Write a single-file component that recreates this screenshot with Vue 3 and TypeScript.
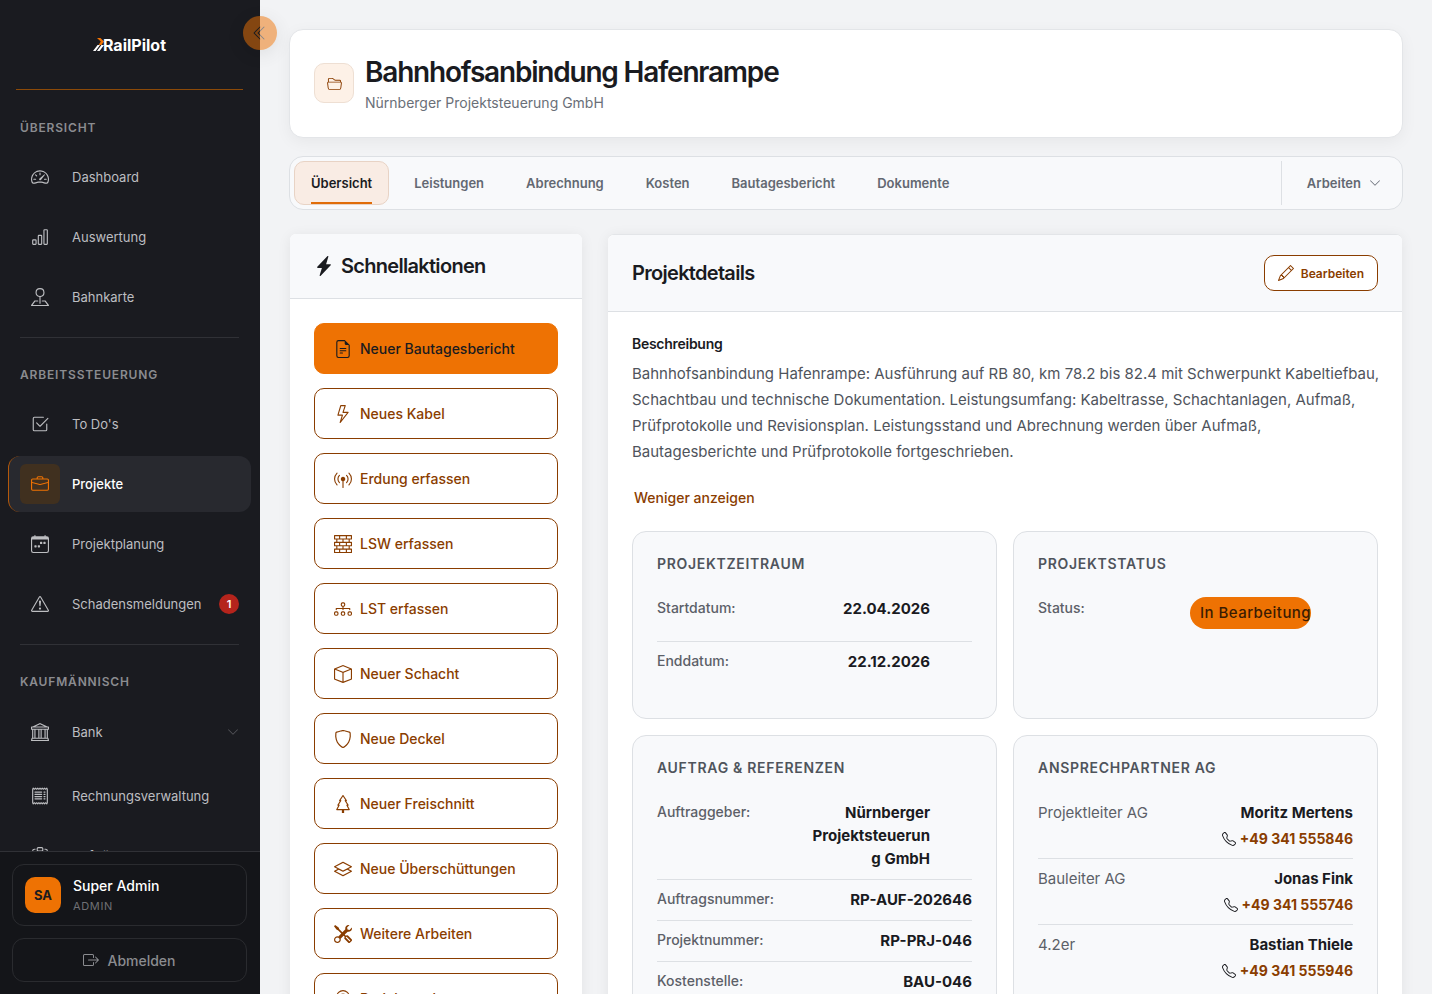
<script setup lang="ts">
import { ref } from 'vue'

interface NavItem {
  label: string
  icon: string
  badge?: number
  expandable?: boolean
}
interface NavGroup {
  title: string
  items: NavItem[]
}
interface DetailRow {
  label: string
  value: string
  editable?: boolean
}
interface Contact {
  role: string
  name: string
  phone: string
}

const icons: Record<string, string> = {
  gauge:
    'M8 4a.5.5 0 0 1 .5.5V6a.5.5 0 0 1-1 0V4.5A.5.5 0 0 1 8 4M3.732 5.732a.5.5 0 0 1 .707 0l.915.914a.5.5 0 1 1-.708.708l-.914-.915a.5.5 0 0 1 0-.707M2 10a.5.5 0 0 1 .5-.5h1.586a.5.5 0 0 1 0 1H2.5A.5.5 0 0 1 2 10m9.5 0a.5.5 0 0 1 .5-.5h1.5a.5.5 0 0 1 0 1H12a.5.5 0 0 1-.5-.5m.754-4.246a.39.39 0 0 0-.527-.02L7.547 9.31a.91.91 0 1 0 1.302 1.258l3.434-4.297a.39.39 0 0 0-.029-.518zM0 10a8 8 0 1 1 15.547 2.661c-.442 1.253-1.845 1.602-2.932 1.25C11.309 13.488 9.475 13 8 13c-1.474 0-3.31.488-4.615.911-1.087.352-2.49.003-2.932-1.25A8 8 0 0 1 0 10m8-7a7 7 0 0 0-6.603 9.329c.203.575.923.876 1.68.63C4.397 12.533 6.358 12 8 12s3.604.532 4.923.96c.757.245 1.477-.056 1.68-.631A7 7 0 0 0 8 3',
  chart:
    'M4 11H2v3h2zm5-4H7v7h2zm5-5v12h-2V2zm-2-1a1 1 0 0 0-1 1v12a1 1 0 0 0 1 1h2a1 1 0 0 0 1-1V2a1 1 0 0 0-1-1zM6 7a1 1 0 0 1 1-1h2a1 1 0 0 1 1 1v7a1 1 0 0 1-1 1H7a1 1 0 0 1-1-1zm-5 4a1 1 0 0 1 1-1h2a1 1 0 0 1 1 1v3a1 1 0 0 1-1 1H2a1 1 0 0 1-1-1z',
  pinMap:
    'M3.1 11.2a.5.5 0 0 1 .4-.2H6a.5.5 0 0 1 0 1H3.75L1.5 15h13l-2.25-3H10a.5.5 0 0 1 0-1h2.5a.5.5 0 0 1 .4.2l3 4a.5.5 0 0 1-.4.8H.5a.5.5 0 0 1-.4-.8zM8 1a3 3 0 1 0 0 6 3 3 0 0 0 0-6M4 4a4 4 0 1 1 4.5 3.969V13.5a.5.5 0 0 1-1 0V7.97A4 4 0 0 1 4 3.999z',
  check:
    'M3 14.5A1.5 1.5 0 0 1 1.5 13V3A1.5 1.5 0 0 1 3 1.5h8a.5.5 0 0 1 0 1H3a.5.5 0 0 0-.5.5v10a.5.5 0 0 0 .5.5h10a.5.5 0 0 0 .5-.5V8a.5.5 0 0 1 1 0v5a1.5 1.5 0 0 1-1.5 1.5zM8.354 10.354l7-7a.5.5 0 0 0-.708-.708L8 9.293 5.354 6.646a.5.5 0 1 0-.708.708l3 3a.5.5 0 0 0 .708 0',
  briefcase:
    'M6.5 1A1.5 1.5 0 0 0 5 2.5V3H1.5A1.5 1.5 0 0 0 0 4.5v8A1.5 1.5 0 0 0 1.5 14h13a1.5 1.5 0 0 0 1.5-1.5v-8A1.5 1.5 0 0 0 14.5 3H11v-.5A1.5 1.5 0 0 0 9.5 1zm0 1h3a.5.5 0 0 1 .5.5V3H6v-.5a.5.5 0 0 1 .5-.5m1.886 6.914L15 7.151V12.5a.5.5 0 0 1-.5.5h-13a.5.5 0 0 1-.5-.5V7.15l6.614 1.764a1.5 1.5 0 0 0 .772 0M1.5 4h13a.5.5 0 0 1 .5.5v1.616L8.129 7.948a.5.5 0 0 1-.258 0L1 6.116V4.5a.5.5 0 0 1 .5-.5',
  calendar:
    'M11 6.5a.5.5 0 0 1 .5-.5h1a.5.5 0 0 1 .5.5v1a.5.5 0 0 1-.5.5h-1a.5.5 0 0 1-.5-.5zm-3 0a.5.5 0 0 1 .5-.5h1a.5.5 0 0 1 .5.5v1a.5.5 0 0 1-.5.5h-1a.5.5 0 0 1-.5-.5zm-5 3a.5.5 0 0 1 .5-.5h1a.5.5 0 0 1 .5.5v1a.5.5 0 0 1-.5.5h-1a.5.5 0 0 1-.5-.5zm3 0a.5.5 0 0 1 .5-.5h1a.5.5 0 0 1 .5.5v1a.5.5 0 0 1-.5.5h-1a.5.5 0 0 1-.5-.5zM3.5 0a.5.5 0 0 1 .5.5V1h8V.5a.5.5 0 0 1 1 0V1h1a2 2 0 0 1 2 2v11a2 2 0 0 1-2 2H2a2 2 0 0 1-2-2V3a2 2 0 0 1 2-2h1V.5a.5.5 0 0 1 .5-.5M1 4v10a1 1 0 0 0 1 1h12a1 1 0 0 0 1-1V4z',
  warning:
    'M7.938 2.016A.13.13 0 0 1 8.002 2a.13.13 0 0 1 .063.016.15.15 0 0 1 .054.057l6.857 11.667c.036.06.035.124.002.183a.2.2 0 0 1-.054.06.1.1 0 0 1-.066.017H1.146a.1.1 0 0 1-.066-.017.2.2 0 0 1-.054-.06.18.18 0 0 1 .002-.183L7.884 2.073a.15.15 0 0 1 .054-.057m1.044-.45a1.13 1.13 0 0 0-1.96 0L.165 13.233c-.457.778.091 1.767.98 1.767h13.713c.889 0 1.438-.99.98-1.767zM7.002 12a1 1 0 1 1 2 0 1 1 0 0 1-2 0M7.1 5.995a.905.905 0 1 1 1.8 0l-.35 3.507a.552.552 0 0 1-1.1 0z',
  bank:
    'm8 0 6.61 3h.89a.5.5 0 0 1 .5.5v2a.5.5 0 0 1-.5.5H15v7a.5.5 0 0 1 .485.38l.5 2a.498.498 0 0 1-.485.62H.5a.498.498 0 0 1-.485-.62l.5-2A.5.5 0 0 1 1 13V6H.5a.5.5 0 0 1-.5-.5v-2A.5.5 0 0 1 .5 3h.89zM3.777 3h8.447L8 1zM2 6v7h1V6zm2 0v7h2.5V6zm3.5 0v7h1V6zm2 0v7H12V6zM13 6v7h1V6zm2-1V4H1v1zm-.39 9H1.39l-.25 1h13.72z',
  receipt:
    'M1.92.506a.5.5 0 0 1 .434.14L3 1.293l.646-.647a.5.5 0 0 1 .708 0L5 1.293l.646-.647a.5.5 0 0 1 .708 0L7 1.293l.646-.647a.5.5 0 0 1 .708 0L9 1.293l.646-.647a.5.5 0 0 1 .708 0l.646.647.646-.647a.5.5 0 0 1 .708 0l.646.647.646-.647a.5.5 0 0 1 .801.13l.5 1A.5.5 0 0 1 15 2v12a.5.5 0 0 1-.053.224l-.5 1a.5.5 0 0 1-.8.13L13 14.707l-.646.647a.5.5 0 0 1-.708 0L11 14.707l-.646.647a.5.5 0 0 1-.708 0L9 14.707l-.646.647a.5.5 0 0 1-.708 0L7 14.707l-.646.647a.5.5 0 0 1-.708 0L5 14.707l-.646.647a.5.5 0 0 1-.708 0L3 14.707l-.646.647a.5.5 0 0 1-.801-.13l-.5-1A.5.5 0 0 1 1 14V2a.5.5 0 0 1 .053-.224l.5-1a.5.5 0 0 1 .367-.27m.217 1.338L2 2.118v11.764l.137.274.51-.51a.5.5 0 0 1 .707 0l.646.647.646-.646a.5.5 0 0 1 .708 0l.646.646.646-.646a.5.5 0 0 1 .708 0l.646.646.646-.646a.5.5 0 0 1 .708 0l.646.646.646-.646a.5.5 0 0 1 .708 0l.646.646.646-.646a.5.5 0 0 1 .708 0l.509.509.137-.274V2.118l-.137-.274-.51.51a.5.5 0 0 1-.707 0L12 1.707l-.646.647a.5.5 0 0 1-.708 0L10 1.707l-.646.647a.5.5 0 0 1-.708 0L8 1.707l-.646.647a.5.5 0 0 1-.708 0L6 1.707l-.646.647a.5.5 0 0 1-.708 0L4 1.707l-.646.647a.5.5 0 0 1-.708 0zM3 4.5a.5.5 0 0 1 .5-.5h6a.5.5 0 1 1 0 1h-6a.5.5 0 0 1-.5-.5m0 2a.5.5 0 0 1 .5-.5h6a.5.5 0 1 1 0 1h-6a.5.5 0 0 1-.5-.5m0 2a.5.5 0 0 1 .5-.5h6a.5.5 0 1 1 0 1h-6a.5.5 0 0 1-.5-.5m0 2a.5.5 0 0 1 .5-.5h6a.5.5 0 0 1 0 1h-6a.5.5 0 0 1-.5-.5m8-6a.5.5 0 0 1 .5-.5h1a.5.5 0 0 1 0 1h-1a.5.5 0 0 1-.5-.5m0 2a.5.5 0 0 1 .5-.5h1a.5.5 0 0 1 0 1h-1a.5.5 0 0 1-.5-.5m0 2a.5.5 0 0 1 .5-.5h1a.5.5 0 0 1 0 1h-1a.5.5 0 0 1-.5-.5m0 2a.5.5 0 0 1 .5-.5h1a.5.5 0 0 1 0 1h-1a.5.5 0 0 1-.5-.5',
  clipboard:
    'M4 1.5H3a2 2 0 0 0-2 2V14a2 2 0 0 0 2 2h10a2 2 0 0 0 2-2V3.5a2 2 0 0 0-2-2h-1v1h1a1 1 0 0 1 1 1V14a1 1 0 0 1-1 1H3a1 1 0 0 1-1-1V3.5a1 1 0 0 1 1-1h1zM9.5 1a.5.5 0 0 1 .5.5v1a.5.5 0 0 1-.5.5h-3a.5.5 0 0 1-.5-.5v-1a.5.5 0 0 1 .5-.5zm-3-1A1.5 1.5 0 0 0 5 1.5v1A1.5 1.5 0 0 0 6.5 4h3A1.5 1.5 0 0 0 11 2.5v-1A1.5 1.5 0 0 0 9.5 0z',
  logout:
    'M10 12.5a.5.5 0 0 1-.5.5h-8a.5.5 0 0 1-.5-.5v-9a.5.5 0 0 1 .5-.5h8a.5.5 0 0 1 .5.5v2a.5.5 0 0 0 1 0v-2A1.5 1.5 0 0 0 9.5 2h-8A1.5 1.5 0 0 0 0 3.5v9A1.5 1.5 0 0 0 1.5 14h8a1.5 1.5 0 0 0 1.5-1.5v-2a.5.5 0 0 0-1 0zM15.854 8.354a.5.5 0 0 0 0-.708l-3-3a.5.5 0 0 0-.708.708L14.293 7.5H5.5a.5.5 0 0 0 0 1h8.793l-2.147 2.146a.5.5 0 0 0 .708.708z',
  folder:
    'M1 3.5A1.5 1.5 0 0 1 2.5 2h2.764c.958 0 1.76.56 2.311 1.184C7.985 3.648 8.48 4 9 4h4.5A1.5 1.5 0 0 1 15 5.5v.64c.57.265.94.876.856 1.546l-.64 5.124A2.5 2.5 0 0 1 12.733 15H3.266a2.5 2.5 0 0 1-2.481-2.19l-.64-5.124A1.5 1.5 0 0 1 1 6.14zM2 6h12v-.5a.5.5 0 0 0-.5-.5H9c-.964 0-1.71-.629-2.174-1.154C6.374 3.334 5.82 3 5.264 3H2.5a.5.5 0 0 0-.5.5zm-.367 1a.5.5 0 0 0-.496.562l.64 5.124A1.5 1.5 0 0 0 3.266 14h9.468a1.5 1.5 0 0 0 1.489-1.314l.64-5.124A.5.5 0 0 0 14.367 7z',
  pencil:
    'M12.146.146a.5.5 0 0 1 .708 0l3 3a.5.5 0 0 1 0 .708l-10 10a.5.5 0 0 1-.168.11l-5 2a.5.5 0 0 1-.65-.65l2-5a.5.5 0 0 1 .11-.168zM11.207 2.5 13.5 4.793 14.793 3.5 12.5 1.207zm1.586 3L10.5 3.207 4 9.707V10h.5a.5.5 0 0 1 .5.5v.5h.5a.5.5 0 0 1 .5.5v.5h.293zm-9.761 5.175-.106.106-1.528 3.821 3.821-1.528.106-.106A.5.5 0 0 1 5 12.5V12h-.5a.5.5 0 0 1-.5-.5V11h-.5a.5.5 0 0 1-.468-.325',
  bolt:
    'M11.251.068a.5.5 0 0 1 .227.58L9.677 6.5H13a.5.5 0 0 1 .364.843l-8 8.5a.5.5 0 0 1-.842-.49L6.323 9.5H3a.5.5 0 0 1-.364-.843l8-8.5a.5.5 0 0 1 .615-.09z',
  lightning:
    'M5.52.359A.5.5 0 0 1 6 0h4a.5.5 0 0 1 .474.658L8.694 6H12.5a.5.5 0 0 1 .395.807l-7 9a.5.5 0 0 1-.873-.454L6.823 9.5H3.5a.5.5 0 0 1-.48-.641zM6.374 1 4.168 8.5H7.5a.5.5 0 0 1 .478.647L6.78 13.04 11.478 7H8a.5.5 0 0 1-.474-.658L9.306 1z',
  broadcast:
    'M3.05 3.05a7 7 0 0 0 0 9.9.5.5 0 0 1-.707.707 8 8 0 0 1 0-11.314.5.5 0 0 1 .707.707m2.122 2.122a4 4 0 0 0 0 5.656.5.5 0 1 1-.708.708 5 5 0 0 1 0-7.072.5.5 0 0 1 .708.708m5.656-.708a.5.5 0 0 1 .708 0 5 5 0 0 1 0 7.072.5.5 0 1 1-.708-.708 4 4 0 0 0 0-5.656.5.5 0 0 1 0-.708m2.122-2.12a.5.5 0 0 1 .707 0 8 8 0 0 1 0 11.313.5.5 0 0 1-.707-.707 7 7 0 0 0 0-9.9.5.5 0 0 1 0-.707zM6 8a2 2 0 1 1 2.5 1.937V15.5a.5.5 0 0 1-1 0V9.937A2 2 0 0 1 6 8',
  bricks:
    'M0 .5A.5.5 0 0 1 .5 0h15a.5.5 0 0 1 .5.5v3a.5.5 0 0 1-.5.5H14v2h1.5a.5.5 0 0 1 .5.5v3a.5.5 0 0 1-.5.5H14v2h1.5a.5.5 0 0 1 .5.5v3a.5.5 0 0 1-.5.5H.5a.5.5 0 0 1-.5-.5v-3a.5.5 0 0 1 .5-.5H2v-2H.5a.5.5 0 0 1-.5-.5v-3A.5.5 0 0 1 .5 6H2V4H.5a.5.5 0 0 1-.5-.5zM3 4v2h4.5V4zm5.5 0v2H13V4zM3 10v2h4.5v-2zm5.5 0v2H13v-2zM1 1v2h3.5V1zm4.5 0v2h5V1zm6 0v2H15V1zM1 7v2h3.5V7zm4.5 0v2h5V7zm6 0v2H15V7zM1 13v2h3.5v-2zm4.5 0v2h5v-2zm6 0v2H15v-2z',
  diagram:
    'M6 3.5A1.5 1.5 0 0 1 7.5 2h1A1.5 1.5 0 0 1 10 3.5v1A1.5 1.5 0 0 1 8.5 6v1H14a.5.5 0 0 1 .5.5v1a.5.5 0 0 1-1 0V8h-5v.5a.5.5 0 0 1-1 0V8h-5v.5a.5.5 0 0 1-1 0v-1A.5.5 0 0 1 2 7h5.5V6A1.5 1.5 0 0 1 6 4.5zM8.5 5a.5.5 0 0 0 .5-.5v-1a.5.5 0 0 0-.5-.5h-1a.5.5 0 0 0-.5.5v1a.5.5 0 0 0 .5.5zM0 11.5A1.5 1.5 0 0 1 1.5 10h1A1.5 1.5 0 0 1 4 11.5v1A1.5 1.5 0 0 1 2.5 14h-1A1.5 1.5 0 0 1 0 12.5zm1.5-.5a.5.5 0 0 0-.5.5v1a.5.5 0 0 0 .5.5h1a.5.5 0 0 0 .5-.5v-1a.5.5 0 0 0-.5-.5zm4.5.5A1.5 1.5 0 0 1 7.5 10h1a1.5 1.5 0 0 1 1.5 1.5v1A1.5 1.5 0 0 1 8.5 14h-1A1.5 1.5 0 0 1 6 12.5zm1.5-.5a.5.5 0 0 0-.5.5v1a.5.5 0 0 0 .5.5h1a.5.5 0 0 0 .5-.5v-1a.5.5 0 0 0-.5-.5zm4.5.5a1.5 1.5 0 0 1 1.5-1.5h1a1.5 1.5 0 0 1 1.5 1.5v1a1.5 1.5 0 0 1-1.5 1.5h-1a1.5 1.5 0 0 1-1.5-1.5zm1.5-.5a.5.5 0 0 0-.5.5v1a.5.5 0 0 0 .5.5h1a.5.5 0 0 0 .5-.5v-1a.5.5 0 0 0-.5-.5z',
  box:
    'M8.186 1.113a.5.5 0 0 0-.372 0L1.846 3.5 8 5.961 14.154 3.5zM15 4.239l-6.5 2.6v7.922l6.5-2.6V4.24zM7.5 14.762V6.838L1 4.239v7.923zM7.443.184a1.5 1.5 0 0 1 1.114 0l7.129 2.852A.5.5 0 0 1 16 3.5v8.662a1 1 0 0 1-.629.928l-7.185 2.874a.5.5 0 0 1-.372 0L.63 13.09a1 1 0 0 1-.63-.928V3.5a.5.5 0 0 1 .314-.464z',
  shield:
    'M5.338 1.59a61 61 0 0 0-2.837.856.48.48 0 0 0-.328.39c-.554 4.157.726 7.19 2.253 9.188a10.7 10.7 0 0 0 2.287 2.233c.346.244.652.42.893.533q.18.085.293.118a1 1 0 0 0 .101.025 1 1 0 0 0 .1-.025q.114-.034.294-.118c.24-.113.547-.29.893-.533a10.7 10.7 0 0 0 2.287-2.233c1.527-1.997 2.807-5.031 2.253-9.188a.48.48 0 0 0-.328-.39c-.651-.213-1.75-.56-2.837-.855C9.552 1.29 8.531 1.067 8 1.067c-.53 0-1.552.223-2.662.524zM5.072.56C6.157.265 7.31 0 8 0s1.843.265 2.928.56c1.11.3 2.229.655 2.887.87a1.54 1.54 0 0 1 1.044 1.262c.596 4.477-.787 7.795-2.465 9.99a11.8 11.8 0 0 1-2.517 2.453 7 7 0 0 1-1.048.625c-.28.132-.581.24-.829.24s-.548-.108-.829-.24a7 7 0 0 1-1.048-.625 11.8 11.8 0 0 1-2.517-2.453C1.928 10.487.545 7.169 1.141 2.692A1.54 1.54 0 0 1 2.185 1.43 63 63 0 0 1 5.072.56',
  tree:
    'M8.416.223a.5.5 0 0 0-.832 0l-3 4.5A.5.5 0 0 0 5 5.5h.098L3.076 8.735A.5.5 0 0 0 3.5 9.5h.191l-1.638 3.276a.5.5 0 0 0 .447.724H7V16h2v-2.5h4.5a.5.5 0 0 0 .447-.724L12.31 9.5h.191a.5.5 0 0 0 .424-.765L10.902 5.5H11a.5.5 0 0 0 .416-.777zM6.437 4.758A.5.5 0 0 0 6 4.5h-.066L8 1.401 10.066 4.5H10a.5.5 0 0 0-.424.765L11.598 8.5H11.5a.5.5 0 0 0-.447.724L12.69 12.5H3.309l1.638-3.276A.5.5 0 0 0 4.5 8.5h-.098l2.022-3.235a.5.5 0 0 0 .013-.507',
  layers:
    'M8.235 1.559a.5.5 0 0 0-.47 0l-7.5 4a.5.5 0 0 0 0 .882L3.188 8 .264 9.559a.5.5 0 0 0 0 .882l7.5 4a.5.5 0 0 0 .47 0l7.5-4a.5.5 0 0 0 0-.882L12.813 8l2.922-1.559a.5.5 0 0 0 0-.882zm3.515 7.008L14.438 10 8 13.433 1.562 10 4.25 8.567l3.515 1.874a.5.5 0 0 0 .47 0zM8 9.433 1.562 6 8 2.567 14.438 6z',
  tools:
    'M1 0 0 1l2.2 3.081a1 1 0 0 0 .815.419h.07a1 1 0 0 1 .708.293l2.675 2.675-2.617 2.654A3.003 3.003 0 0 0 0 13a3 3 0 1 0 5.878-.851l2.654-2.617.968.968-.305.914a1 1 0 0 0 .242 1.023l3.27 3.27a.997.997 0 0 0 1.414 0l1.586-1.586a.997.997 0 0 0 0-1.414l-3.27-3.27a1 1 0 0 0-1.023-.242L10.5 9.5l-.96-.96 2.68-2.643A3.005 3.005 0 0 0 16 3q0-.405-.102-.777l-2.14 2.141L12 4l-.364-1.757L13.777.102a3 3 0 0 0-3.675 3.68L7.462 6.46 4.793 3.793a1 1 0 0 1-.293-.707v-.071a1 1 0 0 0-.419-.814zm9.646 10.646a.5.5 0 0 1 .708 0l2.914 2.915a.5.5 0 0 1-.707.707l-2.915-2.914a.5.5 0 0 1 0-.708M3 11l.471.242.529.026.287.445.445.287.026.529L5 13l-.242.471-.026.529-.445.287-.287.445-.529.026L3 15l-.471-.242L2 14.732l-.287-.445L1.268 14l-.026-.529L1 13l.242-.471.026-.529.445-.287.287-.445.529-.026z',
  phone:
    'M3.654 1.328a.678.678 0 0 0-1.015-.063L1.605 2.3c-.483.484-.661 1.169-.45 1.77a17.6 17.6 0 0 0 4.168 6.608 17.6 17.6 0 0 0 6.608 4.168c.601.211 1.286.033 1.77-.45l1.034-1.034a.678.678 0 0 0-.063-1.015l-2.307-1.794a.68.68 0 0 0-.58-.122l-2.19.547a1.75 1.75 0 0 1-1.657-.459L5.482 8.062a1.75 1.75 0 0 1-.46-1.657l.548-2.19a.68.68 0 0 0-.122-.58zM1.884.511a1.745 1.745 0 0 1 2.612.163L6.29 2.98c.329.423.445.974.315 1.494l-.547 2.19a.68.68 0 0 0 .178.643l2.457 2.457a.68.68 0 0 0 .644.178l2.189-.547a1.75 1.75 0 0 1 1.494.315l2.306 1.794c.829.645.905 1.87.163 2.611l-1.034 1.034c-.74.74-1.846 1.065-2.877.702a18.6 18.6 0 0 1-7.01-4.42 18.6 18.6 0 0 1-4.42-7.009c-.362-1.03-.037-2.137.703-2.877z',
  file:
    'M5.5 7a.5.5 0 0 0 0 1h5a.5.5 0 0 0 0-1zM5 9.5a.5.5 0 0 1 .5-.5h5a.5.5 0 0 1 0 1h-5a.5.5 0 0 1-.5-.5m0 2a.5.5 0 0 1 .5-.5h2a.5.5 0 0 1 0 1h-2a.5.5 0 0 1-.5-.5M9.5 0H4a2 2 0 0 0-2 2v12a2 2 0 0 0 2 2h8a2 2 0 0 0 2-2V4.5zm0 1v2A1.5 1.5 0 0 0 11 4.5h2V14a1 1 0 0 1-1 1H4a1 1 0 0 1-1-1V2a1 1 0 0 1 1-1z',
  collapse:
    'M8.354 1.646a.5.5 0 0 1 0 .708L2.707 8l5.647 5.646a.5.5 0 0 1-.708.708l-6-6a.5.5 0 0 1 0-.708l6-6a.5.5 0 0 1 .708 0M12.354 1.646a.5.5 0 0 1 0 .708L6.707 8l5.647 5.646a.5.5 0 0 1-.708.708l-6-6a.5.5 0 0 1 0-.708l6-6a.5.5 0 0 1 .708 0',
  down:
    'M1.646 4.646a.5.5 0 0 1 .708 0L8 10.293l5.646-5.647a.5.5 0 0 1 .708.708l-6 6a.5.5 0 0 1-.708 0l-6-6a.5.5 0 0 1 0-.708',
  pin:
    'M12.166 8.94c-.524 1.062-1.234 2.12-1.96 3.07A32 32 0 0 1 8 14.58a32 32 0 0 1-2.206-2.57c-.726-.95-1.436-2.008-1.96-3.07C3.304 7.867 3 6.862 3 6a5 5 0 0 1 10 0c0 .862-.305 1.867-.834 2.94M8 16s6-5.686 6-10A6 6 0 0 0 2 6c0 4.314 6 10 6 10M8 8a2 2 0 1 1 0-4 2 2 0 0 1 0 4m0 1a3 3 0 1 0 0-6 3 3 0 0 0 0 6',
}

const groups: NavGroup[] = [
  {
    title: 'Übersicht',
    items: [
      { label: 'Dashboard', icon: 'gauge' },
      { label: 'Auswertung', icon: 'chart' },
      { label: 'Bahnkarte', icon: 'pinMap' },
    ],
  },
  {
    title: 'Arbeitssteuerung',
    items: [
      { label: "To Do's", icon: 'check' },
      { label: 'Projekte', icon: 'briefcase' },
      { label: 'Projektplanung', icon: 'calendar' },
      { label: 'Schadensmeldungen', icon: 'warning', badge: 1 },
    ],
  },
  {
    title: 'Kaufmännisch',
    items: [
      { label: 'Bank', icon: 'bank', expandable: true },
      { label: 'Rechnungsverwaltung', icon: 'receipt' },
      { label: 'Aufträge', icon: 'clipboard' },
    ],
  },
]
const activeNav = ref('Projekte')

const tabs = ['Übersicht', 'Leistungen', 'Abrechnung', 'Kosten', 'Bautagesbericht', 'Dokumente']
const activeTab = ref('Übersicht')

const actions: NavItem[] = [
  { label: 'Neuer Bautagesbericht', icon: 'file' },
  { label: 'Neues Kabel', icon: 'lightning' },
  { label: 'Erdung erfassen', icon: 'broadcast' },
  { label: 'LSW erfassen', icon: 'bricks' },
  { label: 'LST erfassen', icon: 'diagram' },
  { label: 'Neuer Schacht', icon: 'box' },
  { label: 'Neue Deckel', icon: 'shield' },
  { label: 'Neuer Freischnitt', icon: 'tree' },
  { label: 'Neue Überschüttungen', icon: 'layers' },
  { label: 'Weitere Arbeiten', icon: 'tools' },
  { label: 'Projektpunkt', icon: 'pin' },
]

const period: DetailRow[] = [
  { label: 'Startdatum:', value: '22.04.2026', editable: true },
  { label: 'Enddatum:', value: '22.12.2026', editable: true },
]
const references: DetailRow[] = [
  { label: 'Auftraggeber:', value: 'Nürnberger Projektsteuerung GmbH', editable: true },
  { label: 'Auftragsnummer:', value: 'RP-AUF-202646' },
  { label: 'Projektnummer:', value: 'RP-PRJ-046' },
  { label: 'Kostenstelle:', value: 'BAU-046' },
]
const contacts: Contact[] = [
  { role: 'Projektleiter AG', name: 'Moritz Mertens', phone: '+49 341 555846' },
  { role: 'Bauleiter AG', name: 'Jonas Fink', phone: '+49 341 555746' },
  { role: '4.2er', name: 'Bastian Thiele', phone: '+49 341 555946' },
]
</script>

<template>
  <div class="app">
    <aside class="sidebar">
      <button class="toggle" type="button" aria-label="Seitenleiste einklappen">
        <svg class="i16" viewBox="0 0 16 16" aria-hidden="true"><path fill-rule="evenodd" :d="icons.collapse" /></svg>
      </button>
      <a class="brand" href="#">
        <svg class="brand-mark" viewBox="0 0 13 13" aria-hidden="true">
          <path class="stripe" d="M0 13 4.6 7H7L2.6 13zM4 13 8.4 7H11L6.6 13z" />
          <path class="spark" d="M4 0H7.4L11 3.4 8.4 7H5.6L7.8 3.6z" />
        </svg>
        <span>RailPilot</span>
      </a>

      <nav class="nav" aria-label="Hauptnavigation">
        <section v-for="group in groups" :key="group.title" class="group">
          <h2 class="group-title">{{ group.title }}</h2>
          <ul class="list">
            <li v-for="item in group.items" :key="item.label" :class="{ parent: item.expandable }">
              <a class="item" :class="{ active: item.label === activeNav }" href="#" @click.prevent="activeNav = item.label">
                <span class="item-icon">
                  <svg class="i18" viewBox="0 0 16 16" aria-hidden="true"><path fill-rule="evenodd" :d="icons[item.icon]" /></svg>
                </span>
                <span class="item-label">{{ item.label }}</span>
                <span v-if="item.badge" class="badge">{{ item.badge }}</span>
                <svg v-if="item.expandable" class="i12 caret" viewBox="0 0 16 16" aria-hidden="true"><path :d="icons.down" /></svg>
              </a>
            </li>
          </ul>
        </section>
      </nav>

      <footer class="account">
        <div class="user">
          <span class="avatar">SA</span>
          <span class="user-text">
            <strong>Super Admin</strong>
            <small>ADMIN</small>
          </span>
        </div>
        <button class="logout" type="button">
          <svg class="i16" viewBox="0 0 16 16" aria-hidden="true"><path fill-rule="evenodd" :d="icons.logout" /></svg>
          Abmelden
        </button>
      </footer>
    </aside>

    <main class="main">
      <header class="hero">
        <span class="hero-icon">
          <svg class="i15" viewBox="0 0 16 16" aria-hidden="true"><path fill-rule="evenodd" :d="icons.folder" /></svg>
        </span>
        <div>
          <h1>Bahnhofsanbindung Hafenrampe</h1>
          <p>Nürnberger Projektsteuerung GmbH</p>
        </div>
      </header>

      <div class="tabbar">
        <nav class="tabs" aria-label="Projektbereiche">
          <button v-for="tab in tabs" :key="tab" class="tab" :class="{ active: tab === activeTab }" type="button" @click="activeTab = tab">
            <span>{{ tab }}</span>
          </button>
        </nav>
        <button class="work" type="button">
          Arbeiten
          <svg class="i12" viewBox="0 0 16 16" aria-hidden="true"><path :d="icons.down" /></svg>
        </button>
      </div>

      <div class="columns">
        <section class="panel">
          <div class="panel-head quick-head">
            <svg class="i20" viewBox="0 0 16 16" aria-hidden="true"><path :d="icons.bolt" /></svg>
            <h2>Schnellaktionen</h2>
          </div>
          <div class="quick-body">
            <button v-for="(action, index) in actions" :key="action.label" class="action" :class="{ primary: index === 0 }" type="button">
              <svg class="i18" viewBox="0 0 16 16" aria-hidden="true"><path fill-rule="evenodd" :d="icons[action.icon]" /></svg>
              {{ action.label }}
            </button>
          </div>
        </section>

        <section class="panel details">
          <div class="panel-head">
            <h2>Projektdetails</h2>
            <button class="edit" type="button">
              <svg class="i16" viewBox="0 0 16 16" aria-hidden="true"><path fill-rule="evenodd" :d="icons.pencil" /></svg>
              Bearbeiten
            </button>
          </div>
          <div class="details-body">
            <h3>Beschreibung</h3>
            <p class="description">
              Bahnhofsanbindung Hafenrampe: Ausführung auf RB 80, km 78.2 bis 82.4 mit Schwerpunkt Kabeltiefbau,
              Schachtbau und technische Dokumentation. Leistungsumfang: Kabeltrasse, Schachtanlagen, Aufmaß,
              Prüfprotokolle und Revisionsplan. Leistungsstand und Abrechnung werden über Aufmaß,
              Bautagesberichte und Prüfprotokolle fortgeschrieben.
            </p>
            <button class="less" type="button">Weniger anzeigen</button>

            <div class="cards">
              <article class="card">
                <h4>Projektzeitraum</h4>
                <dl>
                  <div v-for="row in period" :key="row.label" class="row tall">
                    <dt>{{ row.label }}</dt>
                    <dd :class="{ inset: row.editable }">{{ row.value }}</dd>
                  </div>
                </dl>
              </article>
              <article class="card">
                <h4>Projektstatus</h4>
                <dl>
                  <div class="row">
                    <dt>Status:</dt>
                    <dd class="inset status">In Bearbeitung</dd>
                  </div>
                </dl>
              </article>
              <article class="card">
                <h4>Auftrag &amp; Referenzen</h4>
                <dl>
                  <div v-for="row in references" :key="row.label" class="row">
                    <dt>{{ row.label }}</dt>
                    <dd :class="{ inset: row.editable }">{{ row.value }}</dd>
                  </div>
                </dl>
              </article>
              <article class="card">
                <h4>Ansprechpartner AG</h4>
                <dl>
                  <div v-for="contact in contacts" :key="contact.name" class="row contact">
                    <dt>{{ contact.role }}</dt>
                    <dd>
                      <span>{{ contact.name }}</span>
                      <span class="phone">
                        <svg class="i14" viewBox="0 0 16 16" aria-hidden="true"><path fill-rule="evenodd" :d="icons.phone" /></svg>
                        <a href="#">{{ contact.phone }}</a>
                      </span>
                    </dd>
                  </div>
                </dl>
              </article>
            </div>
          </div>
        </section>
      </div>
    </main>
  </div>
</template>

<style>
body {
  margin: 0;
}
</style>

<style scoped>
* {
  box-sizing: border-box;
}
.app {
  display: flex;
  height: 100vh;
  overflow: hidden;
  background: #f2f3f5;
  color: #1a1b1f;
  font-family: Inter, 'Liberation Sans', sans-serif;
  font-size: 14px;
}
h1, h2, h3, h4, p, ul, dl, dd {
  margin: 0;
  padding: 0;
}
button {
  font: inherit;
  cursor: pointer;
}
a {
  color: inherit;
  text-decoration: none;
}
svg {
  fill: currentColor;
  flex: none;
}
.i12 { width: 12px; height: 12px; }
.i14 { width: 14px; height: 14px; }
.i15 { width: 15px; height: 15px; }
.i16 { width: 16px; height: 16px; }
.i18 { width: 18px; height: 18px; }
.i20 { width: 20px; height: 20px; }

.sidebar {
  position: relative;
  z-index: 1;
  display: flex;
  flex: none;
  flex-direction: column;
  width: 260px;
  background: #1a1b20;
}
.toggle {
  position: absolute;
  top: 16px;
  right: -17px;
  display: flex;
  align-items: center;
  justify-content: center;
  width: 34px;
  height: 34px;
  padding: 0;
  border: 0;
  border-radius: 50%;
  background: #ee7203;
  color: #1a1b1f;
  opacity: 0.5;
  box-shadow: 0 4px 16px rgba(0, 0, 0, 0.15);
}
.brand {
  display: flex;
  align-items: center;
  justify-content: center;
  height: 90px;
  margin: 0 17px 0 16px;
  border-bottom: 1px solid #8c4a08;
  color: #fff;
  font-size: 16px;
  font-weight: 700;
}
.brand-mark {
  width: 13px;
  height: 13px;
  margin-right: -3px;
}
.stripe { fill: #fff; }
.spark { fill: #ee7203; }
.nav {
  flex: 1;
  min-height: 0;
  overflow-y: auto;
  scrollbar-width: none;
}
.group {
  padding-top: 30px;
}
.group + .group {
  padding-top: 12px;
}
.group + .group::before {
  display: block;
  height: 1px;
  margin: 0 21px 29px 20px;
  background: #303136;
  content: '';
}
.group-title {
  margin: 0 20px 13px;
  color: #8b8c90;
  font-size: 12px;
  font-weight: 600;
  line-height: 16px;
  letter-spacing: 0.07em;
  text-transform: uppercase;
}
.list {
  display: flex;
  flex-direction: column;
  gap: 4px;
  margin: 0 9px 0 8px;
  list-style: none;
}
.parent {
  padding: 1px 0 4px;
}
.item {
  display: flex;
  align-items: center;
  height: 56px;
  padding: 0 12px 0 11px;
  border-left: 1px solid transparent;
  border-radius: 12px;
  color: #bdbec1;
  font-size: 13px;
}
.item.active {
  border-left-color: #b4590b;
  background: #28292f;
  color: #fff;
  font-weight: 500;
}
.item-icon {
  display: flex;
  align-items: center;
  justify-content: center;
  width: 40px;
  height: 40px;
  margin-right: 12px;
  border-radius: 6px;
}
.active .item-icon {
  background: #40301f;
  color: #ee7203;
}
.item-label {
  flex: 1;
}
.badge {
  width: 20px;
  height: 20px;
  border-radius: 50%;
  background: #b5241c;
  color: #fff;
  font-size: 11px;
  font-weight: 600;
  line-height: 20px;
  text-align: center;
}
.caret {
  color: #58595e;
}
.account {
  display: flex;
  flex-direction: column;
  gap: 12px;
  padding: 12px 13px 12px 12px;
  border-top: 1px solid #303136;
  background: #141519;
}
.user {
  display: flex;
  align-items: center;
  gap: 12px;
  height: 62px;
  padding: 0 12px;
  border: 1px solid #2a2b2f;
  border-radius: 12px;
}
.avatar {
  width: 36px;
  height: 36px;
  border-radius: 10px;
  background: #ee7203;
  color: #1a1b1f;
  font-size: 13px;
  font-weight: 700;
  line-height: 36px;
  text-align: center;
}
.user-text {
  display: flex;
  flex-direction: column;
  gap: 2px;
}
.user-text strong {
  color: #fff;
  font-weight: 500;
  line-height: 20px;
}
.user-text small {
  color: #6f7074;
  font-size: 11px;
  line-height: 16px;
  letter-spacing: 0.06em;
}
.logout {
  display: flex;
  align-items: center;
  justify-content: center;
  gap: 8px;
  height: 44px;
  border: 1px solid #2a2b2f;
  border-radius: 12px;
  background: transparent;
  color: #8b8c90;
  font-weight: 500;
}

.main {
  flex: 1;
  min-width: 0;
  padding: 29px;
  overflow-y: auto;
  scrollbar-width: none;
}
.hero {
  display: flex;
  align-items: center;
  gap: 11px;
  height: 109px;
  padding: 0 24px 1px;
  border: 1px solid #e3e5e8;
  border-radius: 14px;
  background: #fff;
  box-shadow: 0 4px 16px rgba(0, 0, 0, 0.05);
}
.hero-icon {
  display: flex;
  align-items: center;
  justify-content: center;
  width: 40px;
  height: 40px;
  border: 1px solid #eedfd3;
  border-radius: 10px;
  background: #fdf1e7;
  color: #8a3d00;
}
h1 {
  font-size: 28px;
  font-weight: 600;
  line-height: 36px;
  letter-spacing: -0.043em;
}
.hero p {
  margin-top: 3px;
  color: #6a6f78;
  line-height: 20px;
}
.tabbar {
  display: flex;
  margin-top: 18px;
  padding: 4px;
  border: 1px solid #dde0e4;
  border-radius: 14px;
  background: #f8f9fb;
}
.tabs {
  display: flex;
  flex: 1;
  gap: 8px;
}
.tab {
  height: 44px;
  padding: 0 16px;
  border: 1px solid transparent;
  border-radius: 10px;
  background: transparent;
  color: #636872;
  font-size: 13px;
  font-weight: 600;
}
.tab span {
  display: block;
  height: 42px;
  border-bottom: 2px solid transparent;
  line-height: 42px;
}
.tab.active {
  border-color: #e8d3c5;
  background: #f9ece4;
  color: #1a1b1f;
}
.tab.active span {
  border-bottom-color: #e06c08;
}
.work {
  display: flex;
  align-items: center;
  gap: 8px;
  padding: 0 17px 0 25px;
  border: 0;
  border-left: 1px solid #dde0e4;
  background: transparent;
  color: #636872;
  font-size: 13px;
  font-weight: 600;
}
.columns {
  display: grid;
  grid-template-columns: 292px minmax(0, 1fr);
  gap: 26px;
  margin: 24px 1px 0;
}
.panel {
  border-radius: 6px;
  background: #fff;
  box-shadow: 0 2px 14px rgba(0, 0, 0, 0.07);
}
.details {
  border-top: 1px solid #e3e5e8;
}
.panel-head {
  display: flex;
  align-items: center;
  justify-content: space-between;
  height: 77px;
  padding: 0 24px;
  border-bottom: 1px solid #dde0e4;
  border-radius: 6px 6px 0 0;
  background: #f8f9fb;
}
.panel-head.quick-head {
  justify-content: flex-start;
  gap: 7px;
  height: 65px;
}
.panel-head h2 {
  font-size: 20px;
  font-weight: 600;
  line-height: 28px;
  letter-spacing: -0.035em;
}
.quick-body {
  display: flex;
  flex-direction: column;
  gap: 14px;
  padding: 24px;
}
.action {
  display: flex;
  align-items: center;
  gap: 8px;
  height: 51px;
  padding: 0 19px;
  border: 1px solid #8a3d00;
  border-radius: 10px;
  background: #fff;
  color: #8a3d00;
  font-weight: 500;
}
.action.primary {
  border-color: #ee7203;
  background: #ee7203;
  color: #1a1b1f;
}
.edit {
  display: flex;
  align-items: center;
  gap: 7px;
  height: 36px;
  padding: 0 13px;
  border: 1px solid #8a3d00;
  border-radius: 10px;
  background: #fff;
  color: #8a3d00;
  font-size: 12px;
  font-weight: 600;
}
.details-body {
  padding: 22px 24px 24px;
}
h3 {
  font-size: 14px;
  font-weight: 600;
  line-height: 20px;
  letter-spacing: -0.02em;
}
.description {
  margin: 7px -4px 0 0;
  color: #4f545c;
  font-size: 15px;
  line-height: 26px;
}
.less {
  display: block;
  margin: 21px 0;
  padding: 0 2px;
  border: 0;
  background: transparent;
  color: #8a3d00;
  font-weight: 500;
  line-height: 24px;
}
.cards {
  display: grid;
  grid-template-columns: 1fr 1fr;
  gap: 16px;
}
.card {
  padding: 22px 24px 24px;
  border: 1px solid #dde0e4;
  border-radius: 14px;
  background: #f8f9fb;
}
h4 {
  margin-bottom: 15px;
  color: #4f545c;
  font-size: 14px;
  font-weight: 600;
  line-height: 20px;
  letter-spacing: 0.05em;
  text-transform: uppercase;
}
.row {
  display: flex;
  justify-content: space-between;
  min-height: 40px;
  padding: 8px 0;
}
.row + .row {
  min-height: 41px;
  border-top: 1px solid #dde0e4;
}
.tall.row {
  min-height: 52px;
}
.tall.row + .row {
  min-height: 53px;
}
dt {
  color: #5c6068;
  font-weight: 500;
  line-height: 22px;
}
dd {
  font-size: 15px;
  font-weight: 700;
  line-height: 23px;
  text-align: right;
}
dd.inset {
  width: 121px;
  margin-right: 42px;
  padding-bottom: 1px;
  word-break: break-word;
}
dd.status {
  height: 32px;
  padding: 0 0 0 10px;
  border-radius: 16px;
  background: #ee7203;
  color: #3a1c02;
  font-weight: 500;
  line-height: 32px;
  letter-spacing: 0.03em;
  text-align: left;
  white-space: nowrap;
}
.contact dt {
  font-size: 15px;
  font-weight: 400;
  line-height: 24px;
}
.contact dd {
  display: flex;
  flex-direction: column;
  gap: 3px;
}
.phone {
  display: flex;
  align-items: center;
  justify-content: flex-end;
  gap: 4px;
  font-size: 14px;
  font-weight: 700;
}
.phone a {
  color: #8a3d00;
}
</style>
